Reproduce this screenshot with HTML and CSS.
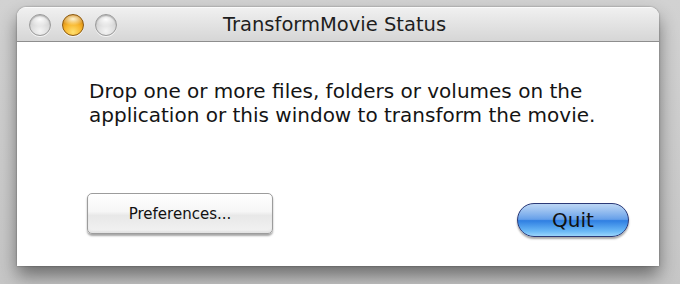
FILE: index.html
```html
<!DOCTYPE html>
<html>
<head>
<meta charset="utf-8">
<link rel="stylesheet" href="styles.css">
</head>
<body>
<div class="desk">
  <div class="window">
    <div class="titlebar">
      <div class="lights">
        <span class="light gray"></span>
        <span class="light amber"></span>
        <span class="light gray"></span>
      </div>
      <div class="title">TransformMovie Status</div>
    </div>
    <div class="content">
      <p class="message">Drop one or more files, folders or volumes on the<br>application or this window to transform the movie.</p>
      <div class="actions">
        <button class="btn prefs">Preferences...</button>
        <button class="btn quit">Quit</button>
      </div>
    </div>
  </div>
</div>
</body>
</html>
```
FILE: styles.css
```css
html, body {
  margin: 0;
  padding: 0;
}
body {
  width: 680px;
  height: 284px;
  overflow: hidden;
  background: linear-gradient(#d2d2d2, #c6c6c6);
  font-family: "DejaVu Sans", "Liberation Sans", sans-serif;
}
.desk {
  padding: 7px 0 0 17px;
}
.window {
  width: 642px;
  height: 259px;
  background: #fff;
  border-radius: 9px 9px 0 0;
  box-shadow: 0 10px 18px rgba(0,0,0,0.45), 0 0 2px rgba(0,0,0,0.4);
  display: flex;
  flex-direction: column;
  overflow: hidden;
}
.titlebar {
  height: 33px;
  flex: none;
  background: linear-gradient(#f0f0f0, #e4e4e4 45%, #d6d6d6);
  border-bottom: 1px solid #8e8e8e;
  border-top: 1px solid #fafafa;
  display: flex;
  align-items: center;
  position: relative;
}
.lights {
  display: flex;
  gap: 11px;
  padding-left: 12px;
  padding-top: 1px;
}
.light {
  width: 22px;
  height: 22px;
  border-radius: 50%;
  box-sizing: border-box;
  display: block;
}
.light.gray {
  background:
    radial-gradient(ellipse 60% 35% at 50% 22%, rgba(255,255,255,0.95), rgba(255,255,255,0) 100%),
    radial-gradient(circle at 50% 80%, #f4f4f4 0%, #d8d8d8 55%, #b6b6b6 100%);
  border: 1px solid #9a9a9a;
  box-shadow: inset 0 1px 1px rgba(0,0,0,0.2), 0 1px 0 rgba(255,255,255,0.7);
}
.light.amber {
  background:
    radial-gradient(ellipse 60% 32% at 50% 20%, rgba(255,250,220,0.95), rgba(255,240,200,0) 100%),
    radial-gradient(circle at 50% 85%, #ffe070 0%, #f7b42a 45%, #c8780a 85%, #7a4a08 100%);
  border: 1px solid #8c5a10;
  box-shadow: 0 1px 0 rgba(255,255,255,0.7);
}
.title {
  position: absolute;
  left: 206px;
  top: 5px;
  font-size: 19.5px;
  color: #1e1e1e;
}
.content {
  flex: 1;
  display: flex;
  flex-direction: column;
  padding: 0 30px 0 70px;
}
.message {
  margin: 37px 0 0 2px;
  font-size: 20px;
  line-height: 24px;
  color: #141414;
}
.actions {
  margin-top: 66px;
  display: flex;
  justify-content: space-between;
  align-items: flex-start;
}
.btn {
  font-family: "DejaVu Sans", "Liberation Sans", sans-serif;
  color: #111;
  cursor: default;
  padding: 0;
}
.prefs {
  width: 186px;
  height: 41px;
  border-radius: 5px;
  border: 1px solid #9c9c9c;
  background: linear-gradient(#ffffff 0%, #f6f6f6 45%, #e8e8e8 55%, #f2f2f2 100%);
  box-shadow: 0 2px 2px rgba(0,0,0,0.35), inset 0 -2px 2px rgba(0,0,0,0.06);
  font-size: 15px;
}
.quit {
  margin-top: 10px;
  width: 112px;
  height: 34px;
  border-radius: 17px;
  border: 1px solid #2c3a78;
  background:
    linear-gradient(rgba(255,255,255,0.55), rgba(255,255,255,0.15) 48%, rgba(255,255,255,0) 52%),
    linear-gradient(#6aa4e8 0%, #4a8ee6 48%, #2f7fe2 52%, #6ab8f6 85%, #9ad6fc 100%);
  box-shadow: 0 2px 2px rgba(0,0,0,0.35);
  font-size: 20px;
}
```
